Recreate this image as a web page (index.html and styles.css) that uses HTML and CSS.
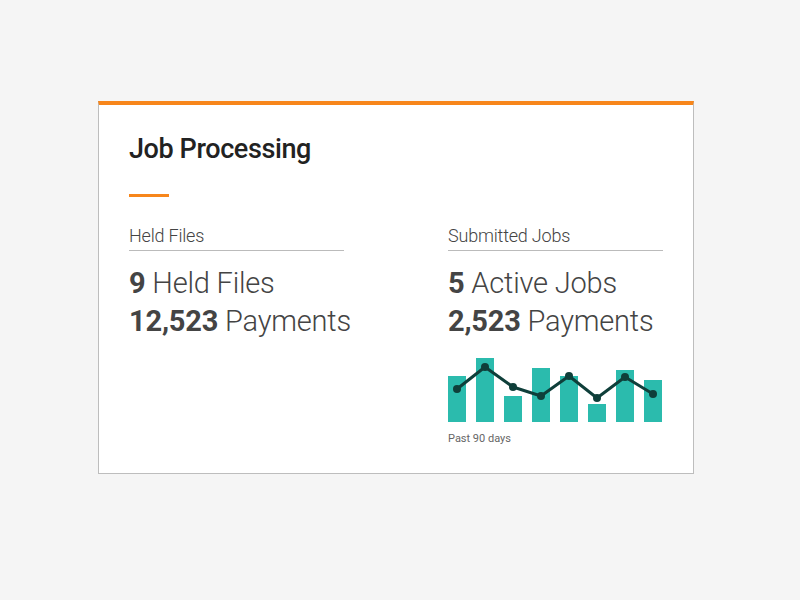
FILE: index.html
```html
<html>
<head>
<title>Job Processing</title>
<link rel="stylesheet" href="styles.css">
</head>
<body>
<div class="card">
  <h1 class="title">Job Processing</h1>
  <div class="accent"></div>
  <div class="cols">
    <div class="col">
      <div class="label">Held Files</div>
      <div class="stat"><b>9</b> Held Files</div>
      <div class="stat"><b>12,523</b> Payments</div>
    </div>
    <div class="col">
      <div class="label">Submitted Jobs</div>
      <div class="stat"><b>5</b> Active Jobs</div>
      <div class="stat"><b>2,523</b> Payments</div>
      <svg class="chart" width="215" height="68" viewBox="0 0 215 68">
        <g fill="#2bbbad">
          <rect x="0" y="22" width="18" height="46"/>
          <rect x="28" y="4" width="18" height="64"/>
          <rect x="56" y="42" width="18" height="26"/>
          <rect x="84" y="14" width="18" height="54"/>
          <rect x="112" y="22" width="18" height="46"/>
          <rect x="140" y="50" width="18" height="18"/>
          <rect x="168" y="16" width="18" height="52"/>
          <rect x="196" y="26" width="18" height="42"/>
        </g>
        <polyline fill="none" stroke="#0f3f3a" stroke-width="3" stroke-linejoin="round"
          points="9,35 37,13 65,33 93,42 121,22 149,44 177,23 205,40"/>
        <g fill="#0f3f3a">
          <circle cx="9" cy="35" r="4"/>
          <circle cx="37" cy="13" r="4"/>
          <circle cx="65" cy="33" r="4"/>
          <circle cx="93" cy="42" r="4"/>
          <circle cx="121" cy="22" r="4"/>
          <circle cx="149" cy="44" r="4"/>
          <circle cx="177" cy="23" r="4"/>
          <circle cx="205" cy="40" r="4"/>
        </g>
      </svg>
      <div class="note">Past 90 days</div>
    </div>
  </div>
</div>
</body>
</html>
```

FILE: styles.css
```css
body {
  margin: 0;
  background: #f5f5f5;
  font-family: Roboto, "Liberation Sans", sans-serif;
}
.card {
  margin: 101px 0 0 98px;
  width: 564px;
  height: 338px;
  background: #fff;
  border: 1px solid #bdbdbd;
  border-top: 4px solid #f7861b;
  padding: 0 0 30px 30px;
}
.title {
  margin: 0;
  padding-top: 27px;
  font-size: 27px;
  line-height: 34px;
  font-weight: 500;
  color: #222;
  letter-spacing: -0.4px;
}
.accent {
  width: 40px;
  height: 3px;
  background: #f7861b;
  margin-top: 28px;
}
.cols {
  display: flex;
  gap: 104px;
  margin-top: 27px;
}
.col {
  width: 215px;
}
.label {
  font-size: 18px;
  font-weight: 300;
  color: #444;
  line-height: 24px;
  padding-bottom: 2px;
  margin-bottom: 13px;
  border-bottom: 1px solid #bbb;
  letter-spacing: -0.2px;
}
.stat {
  font-size: 29px;
  font-weight: 300;
  color: #444;
  line-height: 38px;
  letter-spacing: -0.2px;
  white-space: nowrap;
}
.stat b { font-weight: 700; }
.chart {
  display: block;
  margin-top: 14px;
}
.note {
  font-size: 11px;
  color: #666;
  margin-top: 10px;
}
```
